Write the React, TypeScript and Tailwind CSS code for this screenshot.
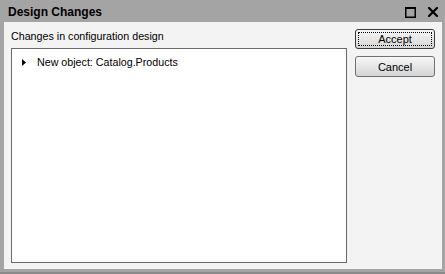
import React from "react";

const font = { fontFamily: '"Liberation Sans", Arial, sans-serif' };

function Btn({ label, def }: { label: string; def?: boolean }) {
  return (
    <button
      className={
        def
          ? "relative h-[20px] w-[80px] rounded-[3px] border border-[#3a3a3a] bg-gradient-to-b from-[#f6f6f6] via-[#e6e6e6] to-[#d4d4d4] text-[11px] leading-[12px] text-black"
          : "relative h-[21px] w-[80px] rounded-[3px] border border-[#707070] bg-gradient-to-b from-[#f6f6f6] via-[#e6e6e6] to-[#d4d4d4] text-[11px] leading-[12px] text-black"
      }
      style={font}
    >
      {def && (
        <span className="absolute inset-[2px] rounded-[1px] border border-dotted border-black" />
      )}
      <span className="relative">{label}</span>
    </button>
  );
}

export default function App() {
  return (
    <div className="flex h-[274px] w-[445px] flex-col bg-[#a4a4a4]" style={font}>
      <div className="flex h-[22px] shrink-0 items-start justify-between">
        <div className="pl-[8px] pt-[5px] text-[12px] font-bold leading-[14px] text-black">
          Design Changes
        </div>
        <div className="flex items-start gap-[12px] pr-[7px] pt-[7px]">
          <svg width="11" height="11" viewBox="0 0 11 11">
            <rect x="0.75" y="1" width="9.5" height="9.25" fill="none" stroke="#000" strokeWidth="1.5" />
            <rect x="0" y="0" width="11" height="2" fill="#000" />
          </svg>
          <svg width="10" height="10" viewBox="0 0 10 10">
            <path d="M1 1 L9 9 M9 1 L1 9" stroke="#000" strokeWidth="2.2" strokeLinecap="square" />
          </svg>
        </div>
      </div>
      <div className="mx-[4px] mr-[3px] flex flex-1 gap-[8px] bg-[#f3f3f3] px-[7px] pb-[6px] pt-[7px]">
        <div className="flex flex-1 flex-col">
          <div className="mt-[1px] text-[10.7px] leading-[12px] text-black">
            Changes in configuration design
          </div>
          <div className="mt-[6px] flex-1 border border-[#6a6a6a] bg-white pt-[7px]">
            <div className="flex items-center">
              <svg className="ml-[10px]" width="4" height="7" viewBox="0 0 4 7">
                <path d="M0 0 L4 3.5 L0 7 Z" fill="#000" />
              </svg>
              <span className="ml-[11px] text-[10.7px] leading-[12px] text-black">
                New object: Catalog.Products
              </span>
            </div>
          </div>
        </div>
        <div className="flex w-[80px] flex-col gap-[7px]">
          <Btn label="Accept" def />
          <Btn label="Cancel" />
        </div>
      </div>
      <div className="h-[5px] shrink-0 border-b-[2px] border-[#8a8a8a]" />
    </div>
  );
}
